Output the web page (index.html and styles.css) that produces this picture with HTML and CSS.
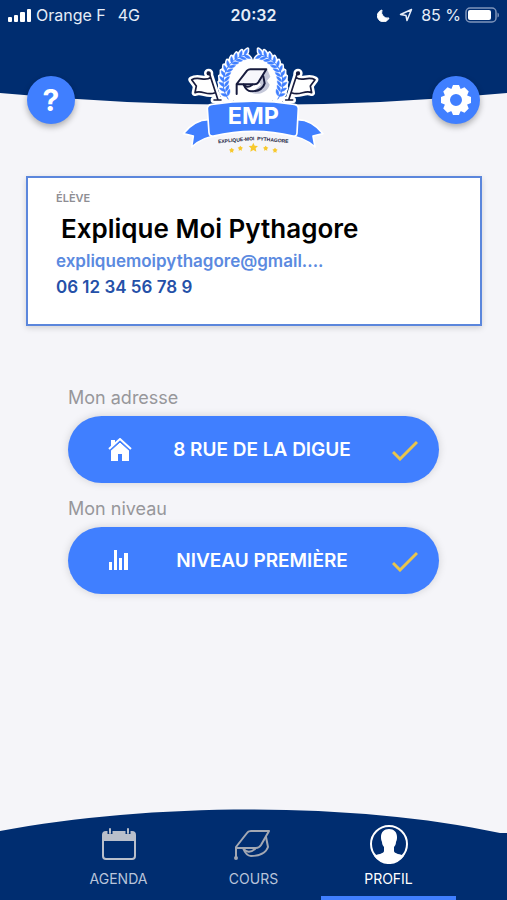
FILE: index.html
```html
<!DOCTYPE html>
<html lang="fr">

<head>
    <meta charset="utf-8">
    <meta name="viewport" content="width=device-width, initial-scale=1.0">
    <title>Explique-Moi Pythagore - Profil</title>
    <link rel="stylesheet" href="styles.css">
</head>

<body>

    <header class="top">
        <svg class="top-curve" viewBox="0 0 507 106" preserveAspectRatio="none" aria-hidden="true">
            <path d="M0 0H507V93Q254 117 0 93Z" fill="#002d70" />
        </svg>

        <div class="status">
            <div class="status-left">
                <svg width="24" height="14" viewBox="0 0 24 14" fill="#fff" aria-hidden="true">
                    <rect x="0" y="9" width="4" height="5" rx="1" />
                    <rect x="6" y="7" width="4" height="7" rx="1" />
                    <rect x="12" y="4" width="5" height="10" rx="1" />
                    <rect x="19" y="1" width="4" height="13" rx="1" />
                </svg>
                <span>Orange F</span>
                <span class="network">4G</span>
            </div>
            <span class="time">20:32</span>
            <div class="status-right">
                <svg width="14" height="14" viewBox="0 0 14 14" aria-hidden="true">
                    <path d="M5 2A6 6 0 1 0 12 10A6 6 0 0 1 5 2Z" fill="#fff" stroke="#fff" />
                </svg>
                <svg class="location" width="14" height="14" viewBox="0 0 14 14" aria-hidden="true">
                    <path d="M12.500 1.500L1.500 6.500L7 7.500L8 12.500Z" fill="none" stroke="#e6edf8" stroke-width="1.500" stroke-linejoin="round" />
                </svg>
                <span>85 %</span>
                <svg width="34" height="16" viewBox="0 0 34 16" aria-hidden="true">
                    <rect x="1" y="1" width="30" height="14" rx="4" fill="none" stroke="#7f95bb" stroke-width="1.500" />
                    <rect x="3" y="3" width="23" height="10" rx="2" fill="#fff" />
                    <path d="M32.500 5.500Q34 6 34 8T32.500 10.500Z" fill="#7f95bb" />
                </svg>
            </div>
        </div>

        <div class="toolbar">
            <button class="round" aria-label="Aide">?</button>

            <svg class="logo" viewBox="0 0 450 360" role="img">
                <defs>
                    <g id="leaf">
                        <path d="M0 0C-9 -2 -14 -8 -15 -16C-6 -14 0 -9 0 0Z" />
                        <path d="M0 0C9 -2 14 -8 15 -16C6 -14 0 -9 0 0Z" />
                    </g>
                    <g id="branch">
                        <use href="#leaf" transform="rotate(-18 222 128) translate(222 42) rotate(90)" />
                        <use href="#leaf" transform="rotate(-28 222 128) translate(222 42) rotate(90)" />
                        <use href="#leaf" transform="rotate(-38 222 128) translate(222 42) rotate(90)" />
                        <use href="#leaf" transform="rotate(-48 222 128) translate(222 42) rotate(90)" />
                        <use href="#leaf" transform="rotate(-58 222 128) translate(222 42) rotate(90)" />
                        <use href="#leaf" transform="rotate(-68 222 128) translate(222 42) rotate(90)" />
                        <use href="#leaf" transform="rotate(-78 222 128) translate(222 42) rotate(90)" />
                        <use href="#leaf" transform="rotate(-88 222 128) translate(222 42) rotate(90)" />
                        <use href="#leaf" transform="rotate(-98 222 128) translate(222 42) rotate(90)" />
                        <use href="#leaf" transform="rotate(-108 222 128) translate(222 42) rotate(90)" />
                        <use href="#leaf" transform="rotate(-118 222 128) translate(222 42) rotate(90)" />
                        <path d="M198 45A86 86 0 0 0 148 178" fill="none" stroke-width="3" />
                    </g>
                    <g id="flag">
                        <path d="M92 103L117 180M105 180H126M95 112C78 127 60 107 38 119L52 138L48 158C68 148 84 169 108 158" fill="none" />
                        <circle cx="89" cy="100" r="4" />
                    </g>
                </defs>

                <!-- white outlines -->
                <g fill="#fff" stroke="#fff" stroke-linejoin="round" stroke-linecap="round">
                    <circle cx="222" cy="134" r="76" />
                    <path d="M192 50A84 84 0 0 0 148 178M252 50A84 84 0 0 1 296 178" fill="none" stroke-width="32" />
                    <g stroke-width="10">
                        <use href="#branch" />
                        <use href="#branch" transform="translate(444 0) scale(-1 1)" />
                    </g>
                    <g stroke-width="20">
                        <use href="#flag" />
                        <use href="#flag" transform="translate(446 0) scale(-1 1)" />
                    </g>
                    <path d="M38 119L95 112L108 158L48 158Z" stroke-width="4" />
                    <path d="M408 119L351 112L338 158L398 158Z" stroke-width="4" />
                </g>

                <g fill="#407fff" stroke="#407fff">
                    <use href="#branch" />
                    <use href="#branch" transform="translate(444 0) scale(-1 1)" />
                </g>
                <g fill="#171b3d" stroke="#171b3d" stroke-width="5" stroke-linecap="round" stroke-linejoin="round">
                    <use href="#flag" />
                    <use href="#flag" transform="translate(446 0) scale(-1 1)" />
                </g>

                <!-- graduation cap -->
                <path d="M210 91H266L274 110L264 122L272 134C268 154 240 168 218 158L246 134Z" fill="#c5c8d9" />
                <g fill="none" stroke="#171b3d" stroke-width="6" stroke-linecap="round" stroke-linejoin="round">
                    <path d="M173 162V132L204 92Q208 88 214 88H262L238 127Q234 133 226 133H173" fill="#f7f7fb" />
                    <path d="M194 134C199 146 205 154 216 154C236 154 252 146 257 130L253 109" />
                    <path d="M194 134Q204 147 220 134" />
                </g>

                <!-- ribbon -->
                <g fill="#407fff" stroke="#fff" stroke-width="5" stroke-linejoin="round">
                    <path d="M90 239Q48 238 13 281L43 288L38 321Q72 290 113 288Z" />
                    <path d="M354 239Q397 238 432 281L402 288L408 321Q374 290 331 288Z" />
                    <path d="M98 193Q222 174 346 193Q357 195 358 205L354 279Q353 290 342 288Q222 260 103 288Q91 290 90 278L85 206Q85 195 98 193Z" />
                </g>
                <text class="logo-name" x="223" y="252" text-anchor="middle">EMP</text>
                <text class="logo-motto" x="172" y="305" text-anchor="middle" transform="rotate(-5 172 305)">EXPLIQUE-MOI</text>
                <text class="logo-motto" x="281" y="305" text-anchor="middle" transform="rotate(5 281 305)">PYTHAGORE</text>
                <g fill="#f7c92f">
                    <path d="M223 308L227 317L237 318L230 325L232 335L223 330L214 335L216 325L209 318L219 317Z" />
                    <path id="star" d="M184 317L187 321L192 323L188 327L189 332L184 330L179 332L180 327L176 323L181 321Z" />
                    <use href="#star" x="76" />
                    <use href="#star" x="-26" y="6" />
                    <use href="#star" x="104" y="6" />
                </g>
            </svg>

            <button class="round" aria-label="Réglages">
                <svg width="32" height="32" viewBox="-16 -16 32 32" fill="#fff" aria-hidden="true">
                    <g id="teeth">
                        <path id="tooth" d="M-5 -10L-3 -15H3L5 -10Z" />
                        <use href="#tooth" transform="rotate(45)" />
                        <use href="#tooth" transform="rotate(90)" />
                        <use href="#tooth" transform="rotate(135)" />
                    </g>
                    <use href="#teeth" transform="rotate(180)" />
                    <circle r="9" fill="none" stroke="#fff" stroke-width="6" />
                </svg>
            </button>
        </div>
    </header>

    <main>
        <section class="card">
            <p class="role">ÉLÈVE</p>
            <h1>Explique Moi Pythagore</h1>
            <p class="mail">expliquemoipythagore@gmail....</p>
            <p class="phone">06 12 34 56 78 9</p>
        </section>

        <section class="fields">
            <div class="field">
                <label for="adresse">Mon adresse</label>
                <button class="pill" id="adresse">
                    <svg width="24" height="24" viewBox="0 0 24 24" aria-hidden="true">
                        <path d="M3 12L12 4L21 12V23H14V16H10V23H3Z" fill="#fff" />
                        <path d="M3 9V2H7V6Z" fill="#fff" />
                        <path d="M1 11L12 1L23 11" fill="none" stroke="#fff" stroke-width="2" />
                        <path d="M2 13L12 4L22 13" fill="none" stroke="#407fff" stroke-width="1" />
                    </svg>
                    <span>8 RUE DE LA DIGUE</span>
                    <svg width="26" height="22" viewBox="0 0 26 22" aria-hidden="true">
                        <path d="M1 13L8 20L25 3" fill="none" stroke="#e9c54b" stroke-width="3" />
                    </svg>
                </button>
            </div>
            <div class="field">
                <label for="niveau">Mon niveau</label>
                <button class="pill" id="niveau">
                    <svg width="24" height="24" viewBox="0 0 24 24" fill="#fff" aria-hidden="true">
                        <rect x="1" y="13" width="3" height="8" />
                        <rect x="6" y="1" width="3" height="20" />
                        <rect x="11" y="9" width="3" height="12" />
                        <rect x="16" y="4" width="4" height="17" />
                    </svg>
                    <span>NIVEAU PREMIÈRE</span>
                    <svg width="26" height="22" viewBox="0 0 26 22" aria-hidden="true">
                        <path d="M1 13L8 20L25 3" fill="none" stroke="#e9c54b" stroke-width="3" />
                    </svg>
                </button>
            </div>
        </section>
    </main>

    <footer class="bottom">
        <svg class="bottom-curve" viewBox="0 0 507 24" preserveAspectRatio="none" aria-hidden="true">
            <path d="M0 22C150 -6 350 -8 500 24H507V25H0Z" fill="#002d70" />
        </svg>
        <nav class="tabs">
            <a class="tab" href="#agenda">
                <svg width="40" height="40" viewBox="0 0 40 40" aria-hidden="true">
                    <rect x="4" y="8" width="32" height="27" rx="3" fill="none" stroke="#b9bfcb" stroke-width="2" />
                    <path d="M4 9H36V17H4Z" fill="#b9bfcb" />
                    <path d="M11 5V10M29 5V10" stroke="#002d70" stroke-width="5" />
                    <path d="M11 5V9M29 5V9" stroke="#b9bfcb" stroke-width="2" stroke-linecap="round" />
                </svg>
                <span>AGENDA</span>
            </a>
            <a class="tab" href="#cours">
                <svg width="40" height="40" viewBox="2 -1 40 40" fill="none" stroke="#a3a8b3" stroke-width="2" stroke-linecap="round" stroke-linejoin="round" aria-hidden="true">
                    <path d="M4 33V22L15 8Q16 6 19 6H37L29 20Q27 23 24 23H4" />
                    <path d="M11 23C13 28 15 31 19 31C27 31 34 28 36 22L34 12" />
                    <path d="M11 23Q16 30 23 24" />
                    <circle cx="4" cy="33" r="1" />
                </svg>
                <span>COURS</span>
            </a>
            <a class="tab active" href="#profil">
                <svg width="40" height="40" viewBox="0 0 40 40" aria-hidden="true">
                    <circle cx="20" cy="20" r="18" fill="none" stroke="#fff" stroke-width="2" />
                    <path d="M20 5C15 5 12 8 12 13C12 14 12 16 13 18C13 20 14 22 15 23V27C15 30 8 30 5 32A18 18 0 0 0 35 32C32 30 25 30 25 27V23C26 22 27 20 27 18C28 16 28 14 28 13C28 8 25 5 20 5Z" fill="#fff" />
                </svg>
                <span>PROFIL</span>
            </a>
        </nav>
    </footer>

</body>

</html>
```
FILE: styles.css
```css
* {
    box-sizing: border-box;
}

body {
    margin: 0;
    min-height: 100vh;
    display: flex;
    flex-direction: column;
    background-color: #f5f5f9;
    font-family: Inter, "Liberation Sans", sans-serif;
}

h1,
p {
    margin: 0;
}

button {
    border: none;
    padding: 0;
    font-family: inherit;
    color: white;
    background-color: #407fff;
    cursor: pointer;
}

svg {
    display: block;
}

.top {
    position: relative;
}

/* blue shape behind the header content */
.top-curve {
    position: absolute;
    top: 0;
    left: 0;
    width: 100%;
    height: 106px;
}

.status {
    position: relative;
    display: grid;
    grid-template-columns: 1fr auto 1fr;
    align-items: center;
    height: 30px;
    padding: 0 8px;
    font-size: 16px;
    color: #e6edf8;
}

.status-left,
.status-right {
    display: flex;
    align-items: center;
    gap: 4px;
}

.status-right {
    justify-content: flex-end;
}

.network {
    margin-left: 8px;
}

.location {
    margin: 0 4px;
}

.time {
    font-weight: 600;
}

.toolbar {
    position: relative;
    display: flex;
    justify-content: space-between;
    align-items: center;
    padding: 10px 27px 0;
}

.round {
    display: flex;
    justify-content: center;
    align-items: center;
    width: 48px;
    height: 48px;
    border-radius: 50%;
    font-size: 30px;
    font-weight: 700;
    box-shadow: 0 3px 6px rgba(0, 0, 0, 0.3);
}

.logo {
    width: 150px;
    height: 120px;
}

.logo-name {
    font-size: 70px;
    font-weight: 700;
    fill: white;
}

.logo-motto {
    font-family: "Liberation Sans", sans-serif;
    font-size: 15px;
    font-weight: 700;
    fill: #171b3d;
}

main {
    flex: 1;
}

.card {
    margin: 16px 25px 0 26px;
    padding: 11px 28px 24px;
    border: 2px solid #5b86dc;
    background-color: white;
    box-shadow: 0 2px 6px rgba(0, 0, 0, 0.15);
}

.role {
    font-size: 11px;
    line-height: 18px;
    font-weight: 600;
    color: #8e8e93;
}

h1 {
    padding: 5px 0 2px 5px;
    font-size: 26px;
    line-height: 34px;
    font-weight: 600;
    color: black;
}

.mail,
.phone {
    font-size: 17px;
    line-height: 26px;
    font-weight: 600;
}

.mail {
    color: #5b8ae0;
}

.phone {
    color: #2450a8;
}

.fields {
    display: flex;
    flex-direction: column;
    gap: 14px;
    padding: 60px 68px 20px;
}

.field {
    display: flex;
    flex-direction: column;
    gap: 6px;
}

.field label {
    font-size: 18px;
    line-height: 24px;
    color: #97979b;
}

.pill {
    display: flex;
    align-items: center;
    height: 67px;
    padding: 0 21px 0 40px;
    border-radius: 34px;
    font-size: 19px;
    font-weight: 600;
    box-shadow: 0 0 8px rgba(0, 0, 0, 0.15);
}

.pill span {
    flex: 1;
    text-align: center;
}

.bottom-curve {
    width: 100%;
    height: 24px;
}

.tabs {
    display: grid;
    grid-template-columns: repeat(3, 1fr);
    padding: 0 51px;
    background-color: #002d70;
}

.tab {
    display: flex;
    flex-direction: column;
    align-items: center;
    gap: 4px;
    margin-top: -9px;
    padding-bottom: 6px;
    border-bottom: 4px solid transparent;
    font-size: 14px;
    line-height: 22px;
    color: #b9c4da;
    text-decoration: none;
}

.active {
    border-bottom-color: #407fff;
    color: white;
}
```
